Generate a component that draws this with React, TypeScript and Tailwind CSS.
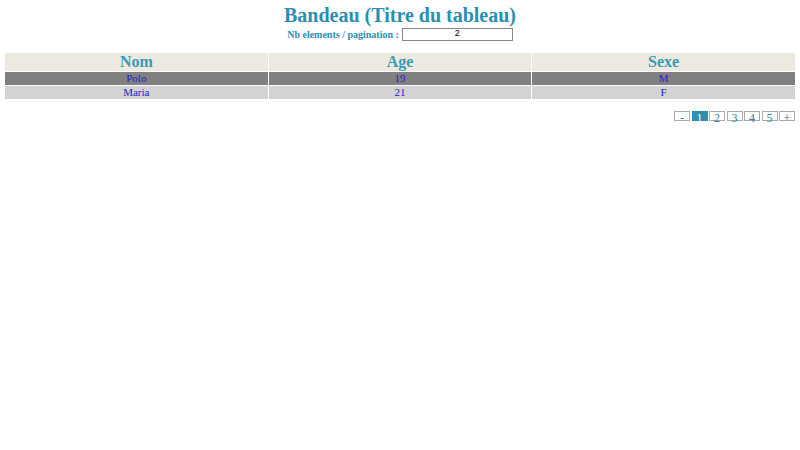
import React from "react";

const rows = [
  { nom: "Polo", age: "19", sexe: "M" },
  { nom: "Maria", age: "21", sexe: "F" },
];

export default function App() {
  return (
    <div className="w-[800px] h-[450px] bg-white" style={{ fontFamily: '"Liberation Serif", serif' }}>
      <div className="flex flex-col items-center pt-[4px]">
        <h1 className="text-[20px] leading-[22px] font-bold text-[#2a90b0]">Bandeau (Titre du tableau)</h1>
        <div className="flex items-center gap-[3px] h-[16px]">
          <span className="text-[10px] font-bold text-[#2a90b0]">Nb elements / pagination :</span>
          <div className="w-[111px] h-[13px] border border-[#888] bg-white flex items-center justify-center text-[9px] text-black" style={{ fontFamily: '"Liberation Sans", sans-serif' }}>
            2
          </div>
        </div>
      </div>
      <div className="mx-[5px] mt-[11px] grid grid-cols-3 gap-[1px]">
        <div className="bg-[#eceae0] h-[18px] flex items-center justify-center text-[16px] font-bold text-[#3a9ab5]">Nom</div>
        <div className="bg-[#eceae0] h-[18px] flex items-center justify-center text-[16px] font-bold text-[#3a9ab5]">Age</div>
        <div className="bg-[#eceae0] h-[18px] flex items-center justify-center text-[16px] font-bold text-[#3a9ab5]">Sexe</div>
        {rows.map((r, i) => {
          const bg = i === 0 ? "bg-[#808080]" : "bg-[#d3d3d3]";
          return (
            <React.Fragment key={i}>
              <div className={`${bg} h-[13px] flex items-center justify-center pb-[2px] text-[11px] leading-[12px] text-[#2222cc]`}>{r.nom}</div>
              <div className={`${bg} h-[13px] flex items-center justify-center pb-[2px] text-[11px] leading-[12px] text-[#2222cc]`}>{r.age}</div>
              <div className={`${bg} h-[13px] flex items-center justify-center pb-[2px] text-[11px] leading-[12px] text-[#2222cc]`}>{r.sexe}</div>
            </React.Fragment>
          );
        })}
      </div>
      <div className="flex justify-end gap-[1.5px] mr-[5px] mt-[12px]">
        {["-", "1", "2", "3", "4", "5", "+"].map((p) => (
          <div
            key={p}
            className={`w-[16px] h-[10px] border flex justify-center text-[12px] leading-[12px] overflow-visible ${
              p === "1" ? "bg-[#2a90b0] border-[#2a90b0] text-white" : "bg-white border-[#aaa] text-[#2a80a0]"
            }`}
          >
            {p}
          </div>
        ))}
      </div>
    </div>
  );
}
